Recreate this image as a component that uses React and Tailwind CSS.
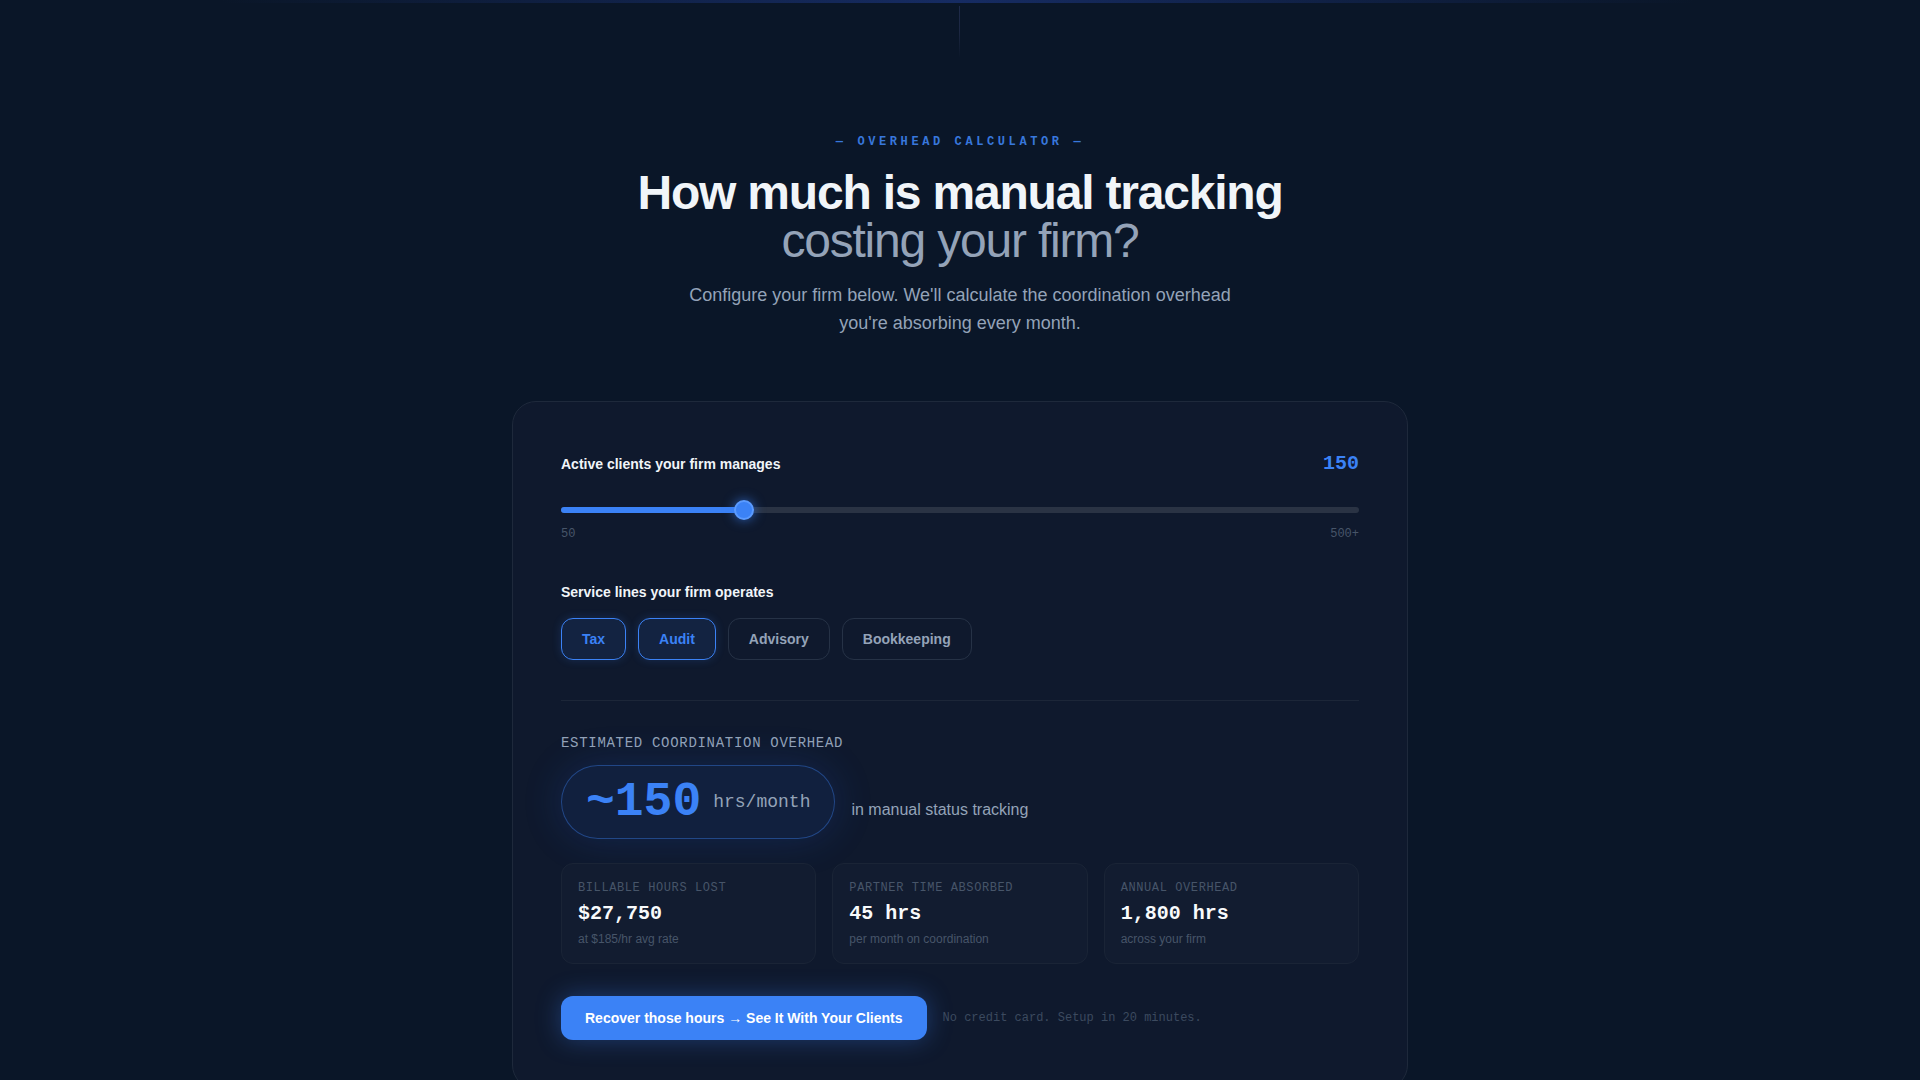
import React, { useState } from "react";

const SERVICES = ["Tax", "Audit", "Advisory", "Bookkeeping"];
const MIN = 50;
const MAX = 500;

const mono = "font-['Liberation_Mono',monospace]";

export default function App() {
  const [clients] = useState(150);
  const [selected, setSelected] = useState(["Tax", "Audit"]);

  const pct = ((clients - MIN) / (MAX - MIN)) * 100;

  const toggle = (s) =>
    setSelected((prev) => (prev.includes(s) ? prev.filter((x) => x !== s) : [...prev, s]));

  return (
    <div className="relative min-h-screen overflow-hidden bg-[#0a1628] font-['Liberation_Sans',Arial,sans-serif] text-white">
      {/* top glow line */}
      <div className="pointer-events-none absolute left-[220px] right-[224px] top-0 h-[3px] bg-gradient-to-r from-transparent via-[#1e3a8a]/60 to-transparent" />
      <div className="pointer-events-none absolute left-[959px] top-[6px] h-[52px] w-px bg-gradient-to-b from-[#1e2a4a] via-[#1c2742] to-transparent" />

      <div className="relative mx-auto flex flex-col items-center px-6 pt-[134px]">
        {/* Header */}
        <p className={`${mono} text-xs font-semibold uppercase tracking-[0.3em] text-[#3877dc]`}>
          — Overhead Calculator —
        </p>
        <h1 className="mt-[19px] text-center text-5xl leading-none tracking-tight">
          <span className="block font-bold text-[#f1f5f9]">How much is manual tracking</span>
          <span className="block font-normal text-[#94a3b8]">costing your firm?</span>
        </h1>
        <p className="mt-4 max-w-xl text-center text-lg text-[#94a3b8]">
          Configure your firm below. We'll calculate the coordination overhead you're absorbing every month.
        </p>

        {/* Calculator card */}
        <div className="mt-16 w-full max-w-4xl rounded-3xl border border-[#1e293b] bg-[#0f192d] p-12">
          {/* Clients slider */}
          <div className="flex items-center justify-between">
            <span className="text-sm font-semibold text-[#f1f5f9]">Active clients your firm manages</span>
            <span className={`${mono} text-xl font-bold text-[#3b82f6]`}>{clients}</span>
          </div>
          <div className="relative mt-5 flex h-6 items-center">
            <div className="relative h-1.5 w-full rounded-full bg-[#2a3344]">
              <div className="absolute inset-y-0 left-0 rounded-full bg-[#3b82f6]" style={{ width: `${pct}%` }} />
            </div>
            <div
              className="absolute top-1/2 h-5 w-5 -translate-x-1/2 -translate-y-1/2 rounded-full border-2 border-[#5b9bff] bg-[#3b82f6] shadow-[0_0_12px_rgba(59,130,246,0.7)]"
              style={{ left: `calc(10px + (100% - 20px) * ${pct / 100})` }}
            />
          </div>
          <div className={`${mono} mt-1 flex justify-between text-xs text-[#475569]`}>
            <span>50</span>
            <span>500+</span>
          </div>

          {/* Service lines */}
          <p className="mt-10 text-sm font-semibold text-[#f1f5f9]">Service lines your firm operates</p>
          <div className="mt-4 flex gap-3">
            {SERVICES.map((s) => {
              const on = selected.includes(s);
              return (
                <button
                  key={s}
                  onClick={() => toggle(s)}
                  className={
                    on
                      ? "rounded-xl border border-[#3b82f6] bg-[#3b82f6]/10 px-5 py-2.5 text-sm font-semibold text-[#3b82f6] shadow-[0_0_10px_rgba(59,130,246,0.2)]"
                      : "rounded-xl border border-[#263246] px-5 py-2.5 text-sm font-semibold text-[#94a3b8]"
                  }
                >
                  {s}
                </button>
              );
            })}
          </div>

          <div className="mt-10 h-px bg-[#1c2638]" />

          {/* Result */}
          <p className={`${mono} mt-8 text-sm uppercase tracking-wider text-[#94a3b8]`}>
            Estimated coordination overhead
          </p>
          <div className="mt-3 flex items-baseline gap-4">
            <div className="flex items-center gap-3 rounded-full border border-[#3b82f6]/40 bg-[#13244a]/60 px-6 py-3 shadow-[0_0_40px_rgba(37,99,235,0.18)]">
              <span className={`${mono} text-5xl font-bold leading-none text-[#3b82f6]`}>~150</span>
              <span className={`${mono} text-lg text-[#94a3b8]`}>hrs/month</span>
            </div>
            <span className="text-base text-[#94a3b8]">in manual status tracking</span>
          </div>

          <div className="mt-6 grid grid-cols-3 gap-4">
            {[
              { label: "Billable hours lost", value: "$27,750", sub: "at $185/hr avg rate" },
              { label: "Partner time absorbed", value: "45 hrs", sub: "per month on coordination" },
              { label: "Annual overhead", value: "1,800 hrs", sub: "across your firm" },
            ].map((c) => (
              <div key={c.label} className="rounded-xl border border-[#1a2436] bg-[#121c30] p-4">
                <p className={`${mono} text-xs uppercase tracking-wider text-[#475569]`}>{c.label}</p>
                <p className={`${mono} mt-1 text-xl font-bold text-[#f8fafc]`}>{c.value}</p>
                <p className="mt-[3px] text-xs text-[#475569]">{c.sub}</p>
              </div>
            ))}
          </div>

          <div className="mt-8 flex items-center gap-4">
            <button className="rounded-xl bg-[#3b82f6] px-6 py-3 text-sm font-semibold text-white shadow-[0_0_24px_rgba(59,130,246,0.35)]">
              Recover those hours → See It With Your Clients
            </button>
            <span className={`${mono} text-xs text-[#3c4a5f]`}>No credit card. Setup in 20 minutes.</span>
          </div>
        </div>
      </div>
    </div>
  );
}
